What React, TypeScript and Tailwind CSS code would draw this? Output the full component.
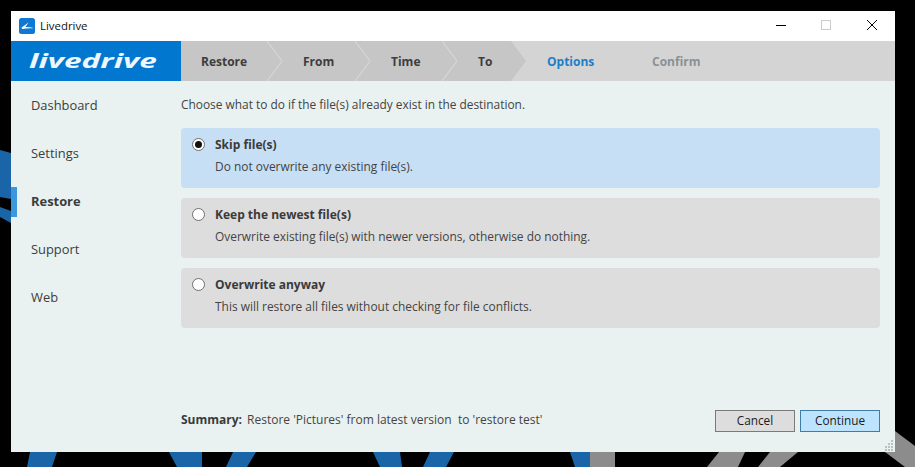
import type { ReactNode } from "react";

const FONT = "font-['Open_Sans',sans-serif]";

const NAV = ["Dashboard", "Settings", "Restore", "Support", "Web"];

const STEPS = [
  { label: "Restore", w: "w-[86px] pl-5" },
  { label: "From", w: "w-[73px] pl-[21px]" },
  { label: "Time", w: "w-[72px] pl-[21px]" },
  { label: "To", w: "w-[54px] pl-[21px]" },
];

const OPTIONS = [
  { title: "Skip file(s)", desc: "Do not overwrite any existing file(s).", selected: true },
  { title: "Keep the newest file(s)", desc: "Overwrite existing file(s) with newer versions, otherwise do nothing.", selected: false },
  { title: "Overwrite anyway", desc: "This will restore all files without checking for file conflicts.", selected: false },
];

// desktop wallpaper peeking out around the window
function Wallpaper() {
  return (
    <svg className="absolute inset-0" width="915" height="467" viewBox="0 0 915 467">
      <g fill="#1a65a8">
        <polygon points="0,150 11,153 11,199 0,197" />
        <polygon points="0,207 11,211 11,223 0,217" />
        <polygon points="30,452 57,452 52,467 27,467" />
        <polygon points="169,452 202,452 202,467 177,467" />
        <polygon points="233,452 256,452 247,467 226,467" />
        <polygon points="373,452 400,452 402,467 380,467" />
        <polygon points="430,452 454,452 446,467 423,467" />
        <polygon points="570,452 590,452 590,467 575,467" />
      </g>
      <g fill="#8c8c8c">
        <rect x="590" y="452" width="25" height="15" />
        <polygon points="719,452 745,452 738,467 707,467" />
        <polygon points="770,452 798,452 780,467 758,467" />
        <polygon points="895,431 915,446 915,467 905,467 885,452 895,452" />
      </g>
    </svg>
  );
}

function AppIcon() {
  return (
    <svg width="16" height="16" viewBox="0 0 16 16">
      <rect width="16" height="16" rx="2.5" fill="#0f78d2" />
      <path d="M2.4 9.4 C6 8.8 10 8.9 13.8 9.7 L13.8 10.2 C10 10 6.5 10.3 3.2 11 Z" fill="#fff" />
      <path d="M2.6 9.5 L9.6 4.4 L6.4 9 Z" fill="#fff" />
    </svg>
  );
}

function WindowControls() {
  return (
    <div className="flex h-full items-start">
      <svg width="119" height="30" viewBox="0 0 119 30">
        <rect x="0" y="14" width="10" height="1" fill="#000" />
        <rect x="45.5" y="9.5" width="9" height="9" fill="none" stroke="#cccccc" />
        <path d="M91 9 L101 19 M101 9 L91 19" stroke="#000" strokeWidth="1" fill="none" />
      </svg>
    </div>
  );
}

function Chevron({ solid }: { solid?: boolean }) {
  return (
    <svg width="15" height="40" viewBox="0 0 15 40" className="shrink-0">
      {solid ? (
        <polygon points="0,0 15,20 0,40" fill="#c6c6c6" />
      ) : (
        <>
          <rect width="15" height="40" fill="#c6c6c6" />
          <path d="M0 0 L15 20 L0 40" fill="none" stroke="#d6d6d6" strokeWidth="1.2" />
        </>
      )}
    </svg>
  );
}

function Step({ label, w, last }: { label: string; w: string; last: boolean }) {
  return (
    <div className="flex">
      <div className={`${w} flex h-10 items-center bg-[#c6c6c6] pt-px text-[12px] font-bold text-[#3d3d3d]`}>{label}</div>
      <Chevron solid={last} />
    </div>
  );
}

function Radio({ checked }: { checked: boolean }) {
  return (
    <span className="flex h-[13px] w-[13px] shrink-0 items-center justify-center rounded-full border border-[#6f6f6f] bg-white">
      {checked && <span className="h-[7px] w-[7px] rounded-full bg-[#111]" />}
    </span>
  );
}

function OptionCard({ title, desc, selected }: { title: string; desc: string; selected: boolean }) {
  return (
    <div className={`flex h-[60px] flex-col rounded-[4px] pl-[11px] pt-[6px] ${selected ? "bg-[#c7dff5]" : "bg-[#dddddd]"}`}>
      <div className="flex h-[20px] items-center gap-[10px] pt-px">
        <Radio checked={selected} />
        <span className="text-[12px] font-bold text-[#3a3a3a]">{title}</span>
      </div>
      <p className="mt-[3px] pl-[23px] text-[11.93px] leading-[19px] text-[#444]">{desc}</p>
    </div>
  );
}

function Button({ primary, children }: { primary?: boolean; children: ReactNode }) {
  return (
    <button
      className={`h-[22px] w-[80px] border text-[11.8px] text-[#1a1a1a] ${
        primary ? "border-[#3f7ca6] bg-[#bde4ff]" : "border-[#7a7a7a] bg-[#dddddd]"
      }`}
    >
      {children}
    </button>
  );
}

export default function App() {
  return (
    <div className={`${FONT} relative h-[467px] w-[915px] overflow-hidden bg-black`}>
      <Wallpaper />
      <div className="relative ml-[11px] flex h-[452px] w-[884px] flex-col pt-[11px]">
        {/* Title bar */}
        <div className="flex h-[30px] shrink-0 items-center justify-between bg-white">
          <div className="flex items-center gap-[5px] pl-2 text-[11.4px] text-[#111]">
            <AppIcon />
            <span>Livedrive</span>
          </div>
          <WindowControls />
        </div>

        {/* Logo and steps */}
        <div className="flex h-10 shrink-0 bg-[#d4d4d4]">
          <div className="flex w-[170px] shrink-0 items-center overflow-hidden bg-[#0277d0] pl-[18px]">
            <span className="origin-left scale-x-[1.58] text-[20px] font-bold italic leading-none text-[#eef7fd]">livedrive</span>
          </div>
          {STEPS.map((s, i) => (
            <Step key={s.label} label={s.label} w={s.w} last={i === STEPS.length - 1} />
          ))}
          <div className="flex h-10 w-[126px] items-center pl-[21px] pt-px text-[12px] font-bold text-[#1b7fc8]">Options</div>
          <div className="flex h-10 items-center pt-px text-[12px] font-bold text-[#8b9094]">Confirm</div>
        </div>

        {/* Body */}
        <div className="relative flex min-h-0 flex-1 bg-[#e9f2f0]">
          <nav className="w-[170px] shrink-0 pt-px">
            {NAV.map((item) => (
              <div
                key={item}
                className={`flex h-12 items-center pl-[20px] text-[12.9px] text-[#3d3d3d] ${item === "Restore" ? "font-bold" : ""}`}
              >
                {item === "Restore" && <span className="-ml-[20px] mr-[14px] h-[30px] w-[6px] bg-[#3b97de]" />}
                {item}
              </div>
            ))}
          </nav>

          <main className="flex min-w-0 flex-1 flex-col pb-5 pr-[15px]">
            <p className="flex h-[47px] shrink-0 items-center text-[11.9px] text-[#444]">
              Choose what to do if the file(s) already exist in the destination.
            </p>
            <div className="flex flex-col gap-[10px]">
              {OPTIONS.map((o) => (
                <OptionCard key={o.title} {...o} />
              ))}
            </div>
            <div className="mt-auto flex items-center justify-between">
              <p className="-mt-[3px] flex gap-[5px] whitespace-pre text-[12px] text-[#444]">
                <span className="font-bold text-[#3a3a3a]">Summary:</span>
                <span>Restore 'Pictures' from latest version  to 'restore test'</span>
              </p>
              <div className="flex gap-[5px]">
                <Button>Cancel</Button>
                <Button primary>Continue</Button>
              </div>
            </div>
          </main>

          {/* resize grip */}
          <svg className="absolute bottom-px right-px" width="11" height="11" viewBox="0 0 11 11" fill="#b9c2c0">
            <rect x="8" y="0" width="2" height="2" />
            <rect x="8" y="3" width="2" height="2" />
            <rect x="5" y="3" width="2" height="2" />
            <rect x="8" y="6" width="2" height="2" />
            <rect x="5" y="6" width="2" height="2" />
            <rect x="2" y="6" width="2" height="2" />
            <rect x="8" y="9" width="2" height="2" />
            <rect x="5" y="9" width="2" height="2" />
            <rect x="2" y="9" width="2" height="2" />
          </svg>
        </div>
      </div>
    </div>
  );
}
